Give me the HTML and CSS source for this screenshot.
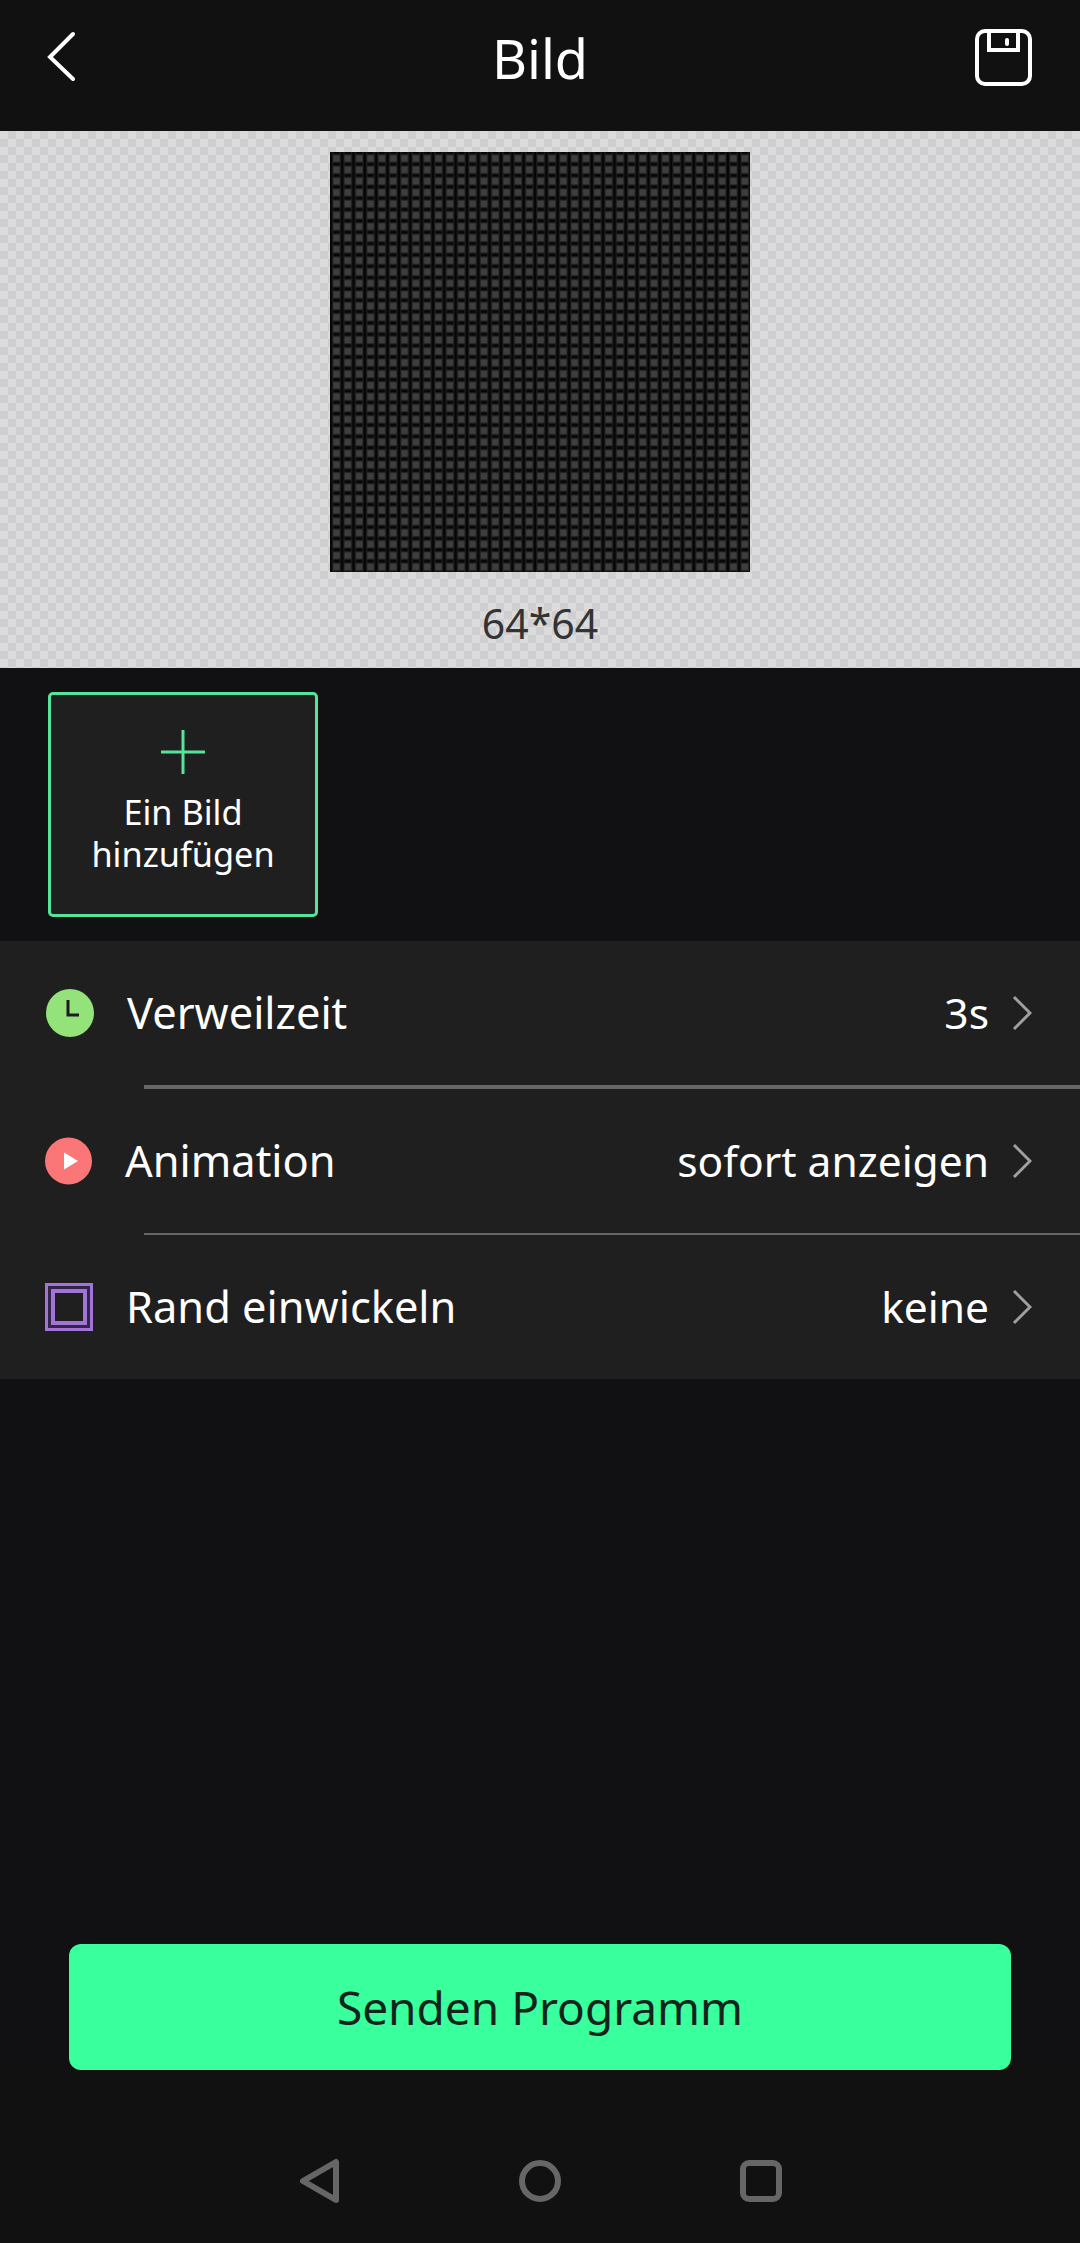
FILE: index.html
```html
<!DOCTYPE html>
<html lang="de">
<head>
    <meta charset="UTF-8">
    <meta name="viewport" content="width=device-width, initial-scale=1.0">
    <title>Bild</title>
    <link rel="stylesheet" href="styles.css">
</head>
<body>
    <header class="topbar">
        <svg class="back-icon" width="50" height="70" viewBox="0 0 50 70">
            <path d="M33 12 L10 35 L33 57" fill="none" stroke="#fff" stroke-width="4" stroke-linecap="round" stroke-linejoin="miter"/>
        </svg>
        <h1>Bild</h1>
        <svg class="save-icon" width="57" height="57" viewBox="0 0 57 57">
            <rect x="2" y="2" width="53" height="53" rx="8" fill="none" stroke="#fff" stroke-width="4"/>
            <path d="M14 2 V21 H43 V2" fill="none" stroke="#fff" stroke-width="4"/>
            <rect x="30" y="9" width="4" height="8" rx="2" fill="#fff"/>
        </svg>
    </header>

    <section class="preview">
        <div class="matrix"></div>
        <div class="size-label">64*64</div>
    </section>

    <section class="add-section">
        <div class="add-tile">
            <svg class="plus-icon" width="44" height="44" viewBox="0 0 44 44">
                <path d="M22 0 V44 M0 22 H44" stroke="#55e59a" stroke-width="3"/>
            </svg>
            <div class="add-text">Ein Bild<br>hinzufügen</div>
        </div>
    </section>

    <section class="settings">
        <div class="row row-time">
            <svg class="row-icon" width="48" height="48" viewBox="0 0 48 48">
                <circle cx="24" cy="24" r="24" fill="#94e27a"/>
                <path d="M22 11 V26 H33" fill="none" stroke="#1c1c1c" stroke-width="3"/>
            </svg>
            <span class="row-label">Verweilzeit</span>
            <span class="row-value">3s</span>
            <svg class="chevron" width="20" height="36" viewBox="0 0 20 36">
                <path d="M2 2 L18 18 L2 34" fill="none" stroke="#a0a0a0" stroke-width="3"/>
            </svg>
        </div>
        <div class="divider divider-thick"></div>
        <div class="row row-anim">
            <svg class="row-icon" width="48" height="48" viewBox="0 0 48 48">
                <circle cx="23.5" cy="24" r="23.5" fill="#fb7676"/>
                <path d="M19 15.500 L33 24 L19 32.500 Z" fill="#fff"/>
            </svg>
            <span class="row-label">Animation</span>
            <span class="row-value">sofort anzeigen</span>
            <svg class="chevron" width="20" height="36" viewBox="0 0 20 36">
                <path d="M2 2 L18 18 L2 34" fill="none" stroke="#a0a0a0" stroke-width="3"/>
            </svg>
        </div>
        <div class="divider"></div>
        <div class="row row-edge">
            <svg class="row-icon" width="48" height="48" viewBox="0 0 48 48">
                <rect x="1.500" y="1.500" width="45" height="45" fill="#33254a" stroke="#a274d6" stroke-width="3"/>
                <rect x="8" y="8" width="32" height="32" fill="#1f1f1f" stroke="#a274d6" stroke-width="4"/>
            </svg>
            <span class="row-label">Rand einwickeln</span>
            <span class="row-value">keine</span>
            <svg class="chevron" width="20" height="36" viewBox="0 0 20 36">
                <path d="M2 2 L18 18 L2 34" fill="none" stroke="#a0a0a0" stroke-width="3"/>
            </svg>
        </div>
    </section>

    <div class="send-section">
        <button class="send-btn">Senden Programm</button>
    </div>

    <nav class="navbar">
        <svg width="42" height="46" viewBox="0 0 42 46">
            <path d="M39 4 V42 L6 23 Z" fill="none" stroke="#666" stroke-width="6" stroke-linejoin="round"/>
        </svg>
        <svg width="42" height="42" viewBox="0 0 42 42">
            <circle cx="21" cy="21" r="18" fill="none" stroke="#666" stroke-width="6"/>
        </svg>
        <svg width="42" height="42" viewBox="0 0 42 42">
            <rect x="3" y="3" width="36" height="36" rx="6" fill="none" stroke="#666" stroke-width="6"/>
        </svg>
    </nav>
</body>
</html>
```

FILE: styles.css
```css
* {
    box-sizing: border-box;
}
body {
    font-family: 'Noto Sans', sans-serif;
    background-color: #111114;
    color: #fff;
    margin: 0;
    height: 2243px;
    display: flex;
    flex-direction: column;
}
.topbar {
    height: 131px;
    background-color: #111;
    display: grid;
    grid-template-columns: 1fr auto 1fr;
    align-items: start;
    padding: 0 48px;
    flex-shrink: 0;
}
.topbar h1 {
    margin: 25px 0 0 0;
    font-size: 54px;
    line-height: 66px;
    font-weight: 400;
}
.back-icon {
    margin: 22px 0 0 -8px;
}
.save-icon {
    margin-top: 29px;
    justify-self: end;
}
.preview {
    height: 537px;
    padding-top: 21px;
    background-color: #dbdbdb;
    background-image: conic-gradient(#cfcfd1 25%, transparent 0 50%, #cfcfd1 0 75%, transparent 0);
    background-size: 16px 16px;
    display: flex;
    flex-direction: column;
    align-items: center;
    flex-shrink: 0;
}
.matrix {
    width: 420px;
    height: 420px;
    background-color: #3e3e3e;
    background-image:
        linear-gradient(90deg, #060606 0, #060606 1.5px, #222 2.8px, transparent 3.8px, transparent 9.2px, #222 10.2px, #060606 11.35px),
        linear-gradient(#060606 0, #060606 1.5px, #222 2.8px, transparent 3.8px, transparent 9.2px, #222 10.2px, #060606 11.35px);
    background-size: 11.35px 11.35px;
}
.size-label {
    margin-top: 24px;
    font-size: 41px;
    line-height: 54px;
    color: #333;
}
.add-section {
    height: 273px;
    padding: 24px 0 0 48px;
    flex-shrink: 0;
}
.add-tile {
    width: 270px;
    height: 225px;
    background-color: #1f1f1f;
    border: 3px solid #55e59a;
    border-radius: 5px;
    display: flex;
    flex-direction: column;
    align-items: center;
    padding-top: 35px;
}
.add-text {
    margin-top: 17px;
    font-size: 34.3px;
    line-height: 42px;
    text-align: center;
}
.settings {
    height: 438px;
    background-color: #1f1f20;
    flex-shrink: 0;
}
.row {
    display: flex;
    align-items: center;
    height: 144px;
    padding: 0 48px 0 45px;
}
.row-time {
    padding-left: 46px;
}
.row-label {
    font-size: 43.4px;
    line-height: 60px;
    margin-left: 33px;
    flex: 1;
}
.row-anim .row-label {
    margin-left: 32px;
}
.row-value {
    font-size: 42.5px;
    line-height: 60px;
    margin-right: 23px;
}
.divider {
    height: 2px;
    margin-left: 144px;
    background-color: #666;
}
.divider-thick {
    height: 4px;
}
.send-section {
    margin-top: auto;
    padding: 0 69px;
}
.send-btn {
    display: block;
    width: 100%;
    height: 126px;
    background-color: #39ff9c;
    color: #14231c;
    border: none;
    border-radius: 12px;
    font-family: inherit;
    font-size: 46px;
}
.navbar {
    height: 173px;
    background-color: #111;
    display: flex;
    justify-content: space-between;
    align-items: center;
    padding: 49px 298px 0 297px;
    flex-shrink: 0;
}
```
